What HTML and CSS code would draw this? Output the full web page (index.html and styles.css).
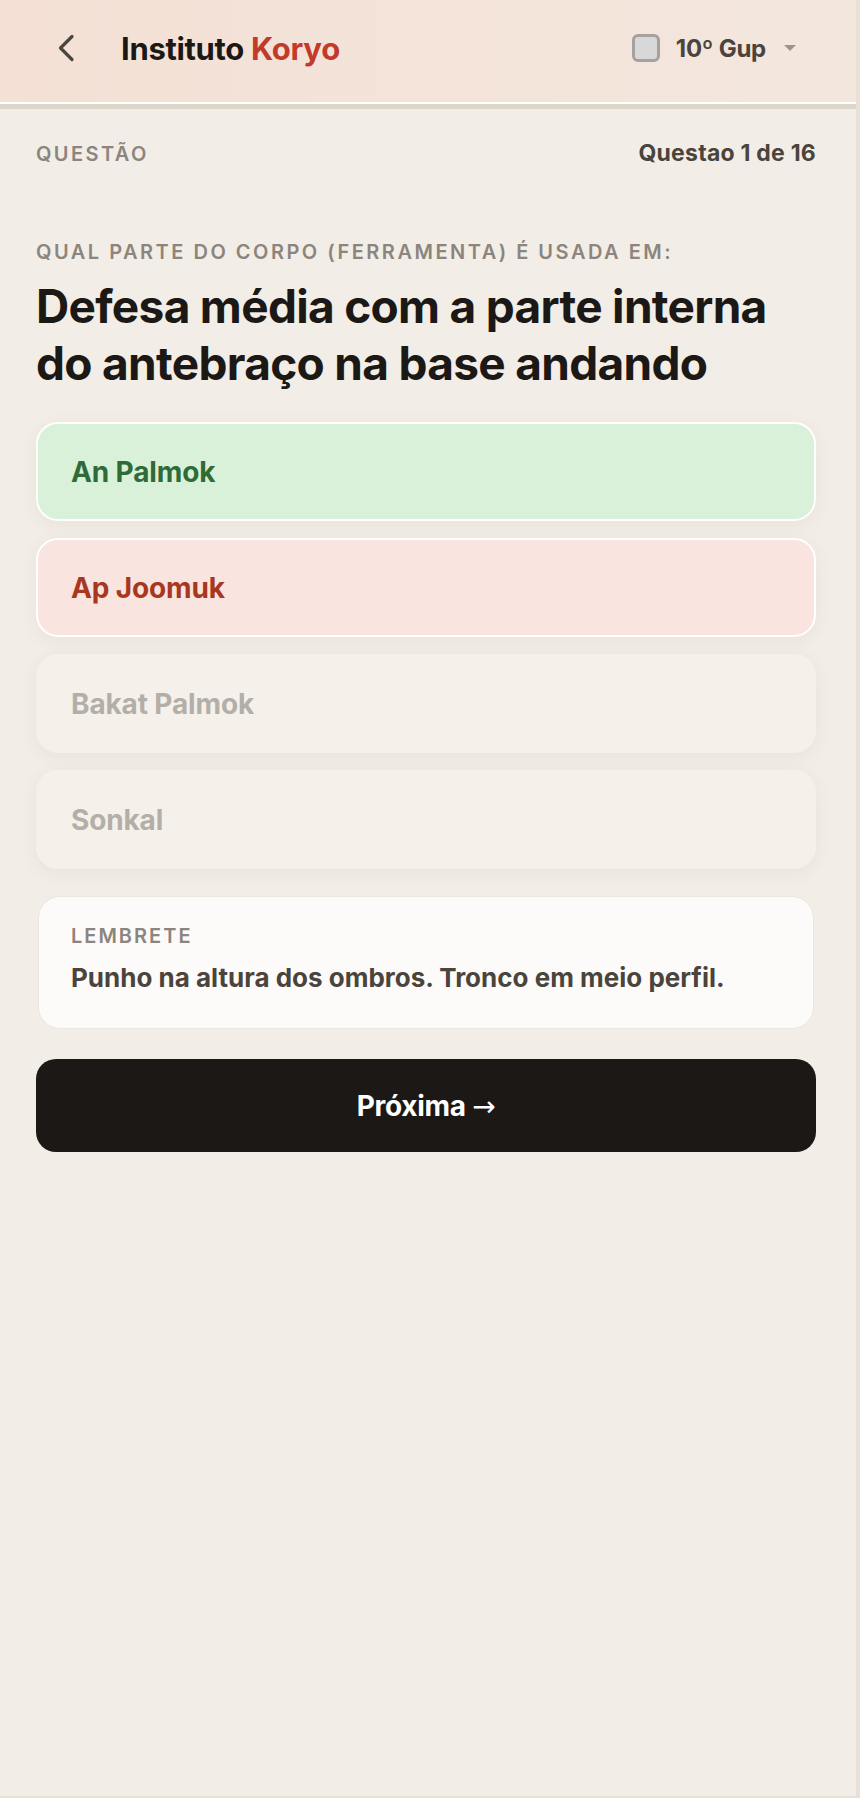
FILE: index.html
```html
<!DOCTYPE html>
<html lang="pt">
<head>
<meta charset="utf-8">
<title>Instituto Koryo</title>
<link rel="stylesheet" href="styles.css">
</head>
<body>
<div class="app">
  <header class="topbar">
    <button class="back" aria-label="Voltar">
      <svg width="18" height="28" viewBox="0 0 18 28"><polyline points="15,2.5 3.5,14 15,25.5" fill="none" stroke="#4a4540" stroke-width="3.2" stroke-linecap="round" stroke-linejoin="round"/></svg>
    </button>
    <h1 class="brand">Instituto <span class="brand-accent">Koryo</span></h1>
    <div class="level">
      <span class="level-check"></span>
      <span class="level-text">10º Gup</span>
      <span class="level-caret"></span>
    </div>
  </header>

  <main class="content">
    <div class="meta">
      <span class="label">QUESTÃO</span>
      <span class="counter">Questao 1 de 16</span>
    </div>

    <p class="prompt">QUAL PARTE DO CORPO (FERRAMENTA) É USADA EM:</p>
    <h2 class="question">Defesa média com a parte interna do antebraço na base andando</h2>

    <div class="answers">
      <div class="answer answer-correct">An Palmok</div>
      <div class="answer answer-wrong">Ap Joomuk</div>
      <div class="answer answer-muted">Bakat Palmok</div>
      <div class="answer answer-muted">Sonkal</div>
    </div>

    <div class="reminder">
      <div class="reminder-label">LEMBRETE</div>
      <div class="reminder-text">Punho na altura dos ombros. Tronco em meio perfil.</div>
    </div>

    <button class="next">Próxima <span class="arrow">→</span></button>
  </main>
</div>
</body>
</html>
```

FILE: styles.css
```css
html, body {
  margin: 0;
  padding: 0;
}
body {
  background: #e6e1d4;
  font-family: Inter, "Noto Sans", "Liberation Sans", sans-serif;
  color: #1c1815;
}
.app {
  width: 856px;
  min-height: 1796px;
  background: #f2ede6;
}

/* Header */
.topbar {
  height: 104px;
  box-sizing: border-box;
  display: flex;
  align-items: center;
  padding: 0 0 6px 57px;
  background: linear-gradient(90deg, #f4e0d5 0%, #f3e4da 60%, #f3e7dd 100%);
  border-bottom: 2px solid #ffffff;
  box-shadow: 0 5px 0 #dcd7c9;
}
.back {
  border: 0;
  background: none;
  padding: 0;
  width: 18px;
  height: 28px;
  display: flex;
  cursor: pointer;
}
.brand {
  margin: 0 0 0 46px;
  font-size: 31px;
  font-weight: 700;
  letter-spacing: -0.01em;
  color: #1c1815;
}
.brand-accent {
  color: #c23a2c;
}
.level {
  margin-left: auto;
  margin-right: 60px;
  display: flex;
  align-items: center;
}
.level-check {
  width: 22px;
  height: 22px;
  border: 3px solid #a5a19d;
  border-radius: 6px;
  background: #d8d8d8;
}
.level-text {
  margin-left: 16px;
  font-size: 24px;
  font-weight: 700;
  letter-spacing: -0.01em;
  color: #4a443c;
}
.level-caret {
  margin-left: 18px;
  width: 0;
  height: 0;
  border-left: 6px solid transparent;
  border-right: 6px solid transparent;
  border-top: 6px solid #9c958e;
}

/* Content */
.content {
  padding: 37px 40px 0 36px;
}
.meta {
  display: flex;
  justify-content: space-between;
  align-items: baseline;
  line-height: 24px;
}
.label {
  font-size: 20px;
  font-weight: 600;
  letter-spacing: 0.12em;
  color: #8c857d;
}
.counter {
  font-size: 23px;
  font-weight: 700;
  letter-spacing: 0.01em;
  color: #4a443c;
}
.prompt {
  margin: 74px 0 0;
  font-size: 20px;
  line-height: 24px;
  font-weight: 600;
  letter-spacing: 0.125em;
  color: #8c857d;
}
.question {
  margin: 14px 0 0;
  max-width: 750px;
  font-size: 46px;
  line-height: 57px;
  font-weight: 700;
  letter-spacing: -0.015em;
  color: #1c1815;
}

.answers {
  margin-top: 30px;
  display: flex;
  flex-direction: column;
  gap: 17px;
}
.answer {
  height: 99px;
  box-sizing: border-box;
  display: flex;
  align-items: center;
  padding-left: 33px;
  border: 2px solid transparent;
  border-radius: 22px;
  font-size: 28px;
  font-weight: 700;
  letter-spacing: -0.005em;
  box-shadow: 0 4px 18px rgba(80, 60, 40, 0.06);
}
.answer-correct {
  background: #d9f0d9;
  border-color: #ffffff;
  color: #2f6b37;
}
.answer-wrong {
  background: #f9e4df;
  border-color: #ffffff;
  color: #a83720;
}
.answer-muted {
  background: #f5f1ea;
  border-color: #f5f1ea;
  color: #b3afa8;
}

.reminder {
  margin: 27px 2px 0;
  height: 133px;
  box-sizing: border-box;
  padding: 27px 32px 0;
  background: #fcfbf9;
  border: 1px solid #ebe6de;
  border-radius: 22px;
}
.reminder-label {
  font-size: 20px;
  line-height: 24px;
  font-weight: 600;
  letter-spacing: 0.1em;
  color: #8c857d;
}
.reminder-text {
  margin-top: 14px;
  font-size: 26px;
  line-height: 32px;
  font-weight: 700;
  letter-spacing: 0;
  color: #4a443c;
}

.next {
  margin-top: 30px;
  width: 100%;
  height: 93px;
  border: 0;
  border-radius: 20px;
  background: #1c1815;
  color: #ffffff;
  font-family: inherit;
  font-size: 28px;
  font-weight: 700;
  letter-spacing: -0.01em;
  cursor: pointer;
}
.arrow {
  font-family: "DejaVu Sans", sans-serif;
  font-weight: 400;
}
```
